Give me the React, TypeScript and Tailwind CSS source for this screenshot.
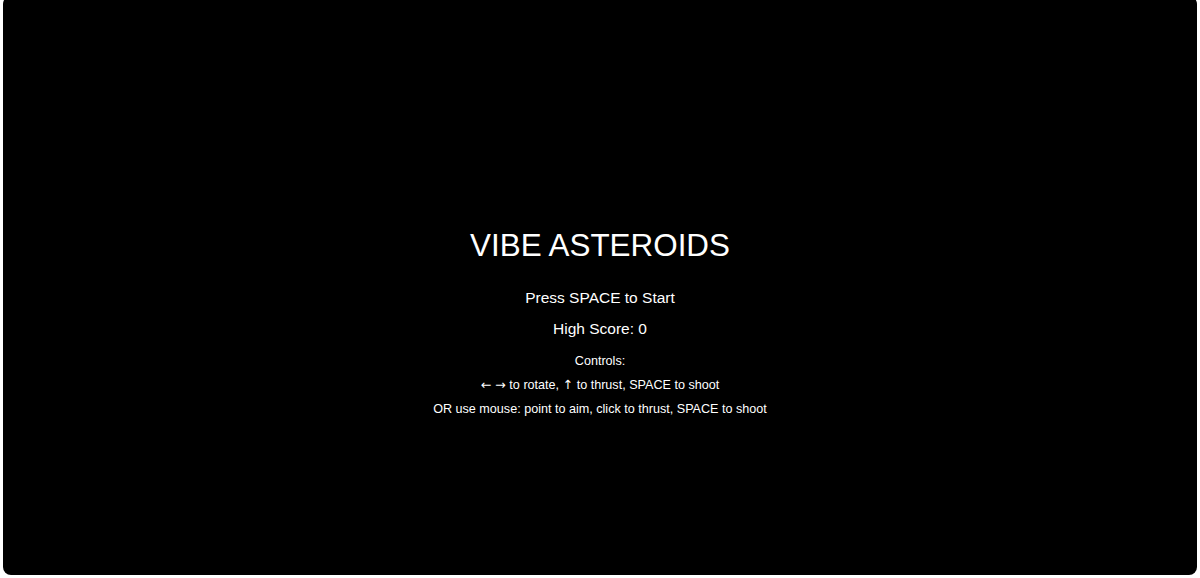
export default function App() {
  return (
    <div className="h-[578px] w-full overflow-hidden bg-white px-[3px] pb-[3px]">
      <div
        className="-mt-1 flex h-[579px] flex-col items-center rounded-lg bg-black pt-[230px] text-white"
        style={{ fontFamily: '"Liberation Sans", Arial, sans-serif' }}
      >
        <h1 className="text-[31.4px] leading-[40px]">VIBE ASTEROIDS</h1>
        <p className="mt-[16px] text-[15.5px] leading-[31px]">Press SPACE to Start</p>
        <p className="text-[15.5px] leading-[31px]">High Score: 0</p>
        <div className="mt-[4.5px] flex flex-col items-center text-[12.6px] leading-[24px]">
          <p>Controls:</p>
          <p>
            <span className="font-['DejaVu_Sans']">← →</span> to rotate,{' '}
            <span className="font-['DejaVu_Sans']">↑</span> to thrust, SPACE to shoot
          </p>
          <p>OR use mouse: point to aim, click to thrust, SPACE to shoot</p>
        </div>
      </div>
    </div>
  );
}
